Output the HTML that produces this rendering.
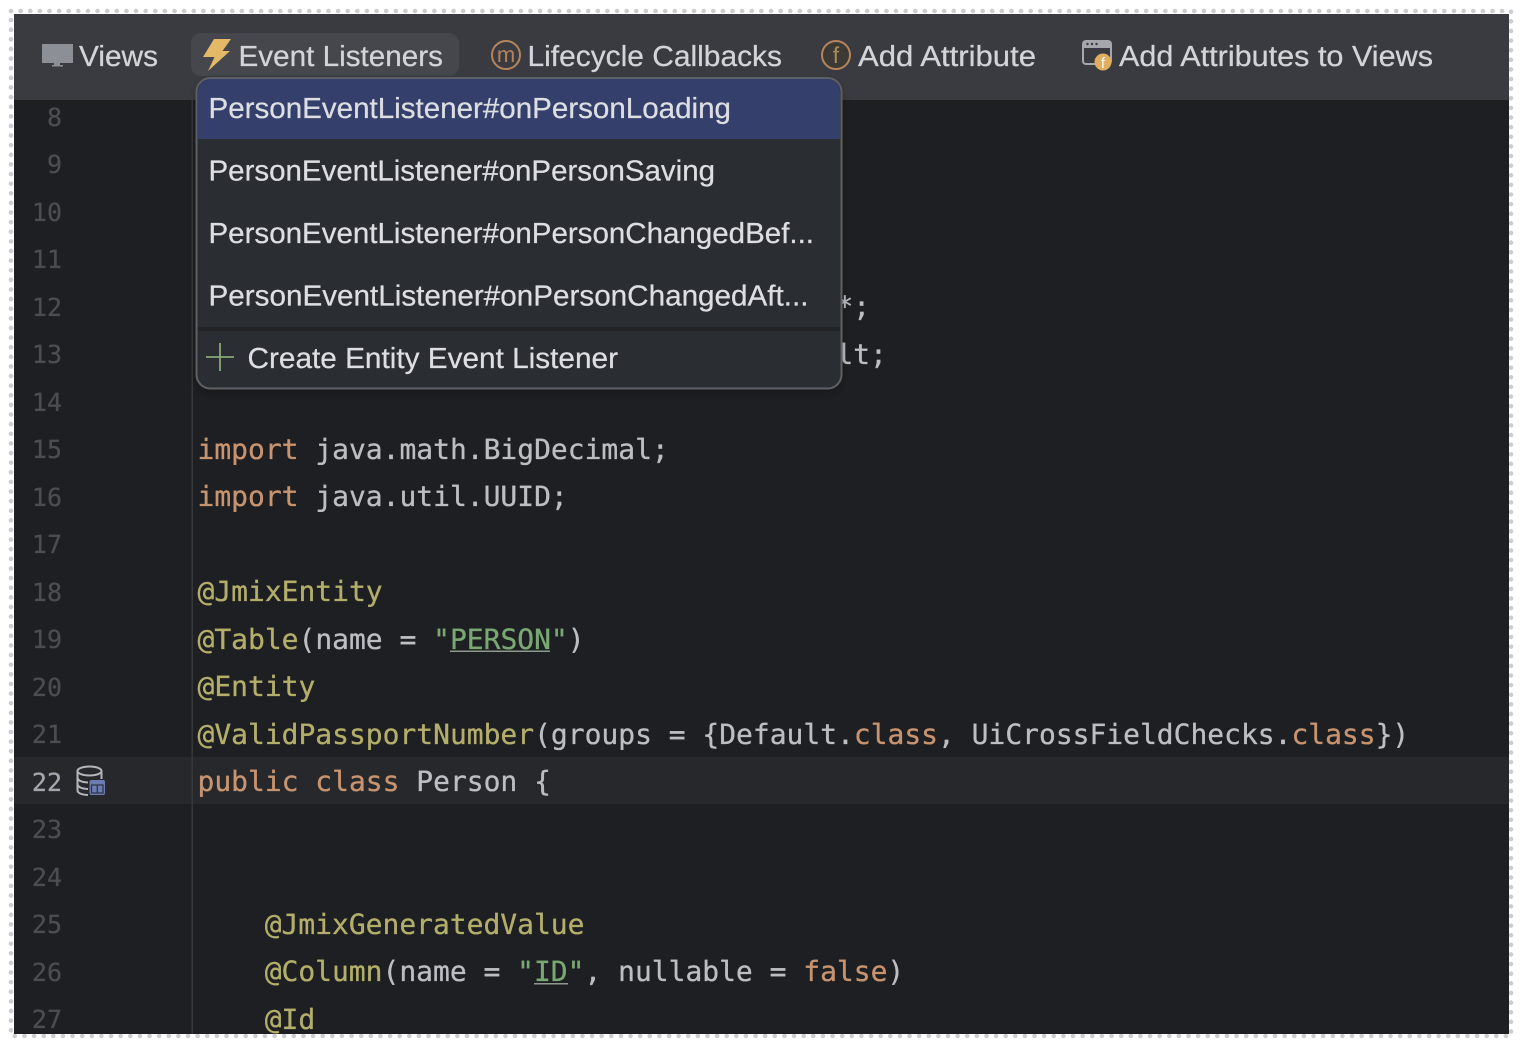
<!DOCTYPE html>
<html><head><meta charset="utf-8">
<style>
html,body{margin:0;padding:0;background:#fff;width:1522px;height:1050px;overflow:hidden}
svg{display:block;filter:blur(.3px)}
text{white-space:pre;text-rendering:geometricPrecision}
.u{font-family:"Liberation Sans",sans-serif;font-size:29px;fill:#d2d4d8;stroke:#d2d4d8;stroke-width:.25px}
.i{font-family:"Liberation Sans",sans-serif;font-size:29px;fill:#dcdee2;stroke:#dcdee2;stroke-width:.25px}
.c{font-family:"DejaVu Sans Mono","Liberation Mono",monospace;font-size:27.96px;fill:#bcbec4;stroke:#bcbec4;stroke-width:.3px}
.n{font-family:"DejaVu Sans Mono","Liberation Mono",monospace;font-size:25px;fill:#4b4d51;stroke:#4b4d51;stroke-width:.25px;text-anchor:end}
.k{fill:#c8946f;stroke:#c8946f}.a{fill:#b3ae6a;stroke:#b3ae6a}.s{fill:#7aa873;stroke:#7aa873}
</style></head><body>
<svg width="1522" height="1050" viewBox="0 0 1522 1050" xmlns="http://www.w3.org/2000/svg">
<defs><filter id="sh" x="-5%" y="-5%" width="110%" height="112%"><feDropShadow dx="0" dy="4" stdDeviation="5" flood-color="#000" flood-opacity=".3"/></filter></defs>
<rect width="1522" height="1050" fill="#fff"/>
<rect x="11" y="11" width="1500" height="1025" fill="none" stroke="#cdcdcf" stroke-width="4.6" stroke-linecap="round" stroke-dasharray="0 9.62"/>
<rect x="14" y="14" width="1495" height="1020" fill="#1e1f22"/>
<rect x="14" y="14" width="1495" height="86" fill="#3a3b40"/>
<rect x="14" y="757" width="1495" height="47" fill="#26282c"/>
<rect x="191.500" y="100" width="1.500" height="934" fill="#36383c"/>

<!-- line numbers -->
<g class="n">
<text class="n" x="62" y="126">8</text>
<text class="n" x="62" y="173">9</text>
<text class="n" x="62" y="221">10</text>
<text class="n" x="62" y="268">11</text>
<text class="n" x="62" y="316">12</text>
<text class="n" x="62" y="363">13</text>
<text class="n" x="62" y="411">14</text>
<text class="n" x="62" y="458">15</text>
<text class="n" x="62" y="506">16</text>
<text class="n" x="62" y="553">17</text>
<text class="n" x="62" y="601">18</text>
<text class="n" x="62" y="648">19</text>
<text class="n" x="62" y="696">20</text>
<text class="n" x="62" y="743">21</text>
<text class="n" x="62" y="791" style="fill:#a4a7ad;stroke:#a4a7ad">22</text>
<text class="n" x="62" y="838">23</text>
<text class="n" x="62" y="886">24</text>
<text class="n" x="62" y="933">25</text>
<text class="n" x="62" y="981">26</text>
<text class="n" x="62" y="1028">27</text>
</g>

<!-- code -->
<text class="c" x="836.400" y="316">*;</text>
<text class="c" x="836.400" y="364">lt;</text>
<text class="c" x="197.500" y="459"><tspan class="k">import</tspan> java.math.BigDecimal;</text>
<text class="c" x="197.500" y="506"><tspan class="k">import</tspan> java.util.UUID;</text>
<text class="c a" x="197.500" y="601">@JmixEntity</text>
<text class="c" x="197.500" y="649"><tspan class="a">@Table</tspan>(name = <tspan class="s">"PERSON"</tspan>)</text>
<rect x="450" y="650.500" width="100" height="1.500" fill="#8c9a8c"/>
<text class="c a" x="197.500" y="696">@Entity</text>
<text class="c" x="197.500" y="744"><tspan class="a">@ValidPassportNumber</tspan>(groups = {Default.<tspan class="k">class</tspan>, UiCrossFieldChecks.<tspan class="k">class</tspan>})</text>
<text class="c" x="197.500" y="791"><tspan class="k">public class</tspan> Person {</text>
<text class="c a" x="264.700" y="934">@JmixGeneratedValue</text>
<text class="c" x="264.700" y="981"><tspan class="a">@Column</tspan>(name = <tspan class="s">"ID"</tspan>, nullable = <tspan class="k">false</tspan>)</text>
<rect x="534" y="983" width="34" height="1.500" fill="#8c9a8c"/>
<text class="c a" x="264.700" y="1029">@Id</text>

<!-- db icon -->
<g fill="none" stroke="#b4b6bb" stroke-width="2">
<ellipse cx="89.500" cy="771" rx="12" ry="4.500"/>
<path d="M77.500 771V790Q77.500 794.500 88 795M77.500 777.500Q78 782 88 782.500M77.500 784Q78 788.500 88 789M101.500 771V779"/>
</g>
<rect x="89.500" y="780" width="15.500" height="15" rx="2" fill="#6b7cb0"/>
<path d="M91.500 785H103V793H91.500ZM97.250 785V793M91.500 785V793" stroke="#2f3648" stroke-width="1.300" fill="none"/>

<!-- toolbar -->
<rect x="191" y="33" width="268" height="43" rx="10" fill="#46474c"/>
<rect x="42" y="44" width="31" height="19" fill="#8d8f96"/>
<rect x="54" y="63" width="6" height="2" fill="#8d8f96"/><rect x="52" y="65" width="11" height="1.500" fill="#8d8f96"/>
<text class="u" x="79" y="66" textLength="79" lengthAdjust="spacingAndGlyphs">Views</text>

<path d="M214 39H231L222.500 51H230L208 71L214.500 57H203Z" fill="#e3b968"/>
<text class="u" x="238.500" y="66" textLength="204.500" lengthAdjust="spacingAndGlyphs">Event Listeners</text>

<circle cx="506" cy="55" r="14" fill="#3a3b40" stroke="#b5845c" stroke-width="2"/>
<text x="506" y="62" text-anchor="middle" font-family="Liberation Sans,sans-serif" font-size="22" fill="#b5845c">m</text>
<text class="u" x="527.500" y="66" textLength="254.500" lengthAdjust="spacingAndGlyphs">Lifecycle Callbacks</text>

<circle cx="836" cy="55" r="14" fill="#3d3a36" stroke="#b5845c" stroke-width="2"/>
<text x="836" y="63" text-anchor="middle" font-family="Liberation Sans,sans-serif" font-size="23" fill="#a88a5c">f</text>
<text class="u" x="858" y="66" textLength="178" lengthAdjust="spacingAndGlyphs">Add Attribute</text>

<rect x="1083" y="41" width="28" height="23" rx="3" fill="none" stroke="#a5a7ac" stroke-width="2"/>
<rect x="1083" y="41" width="28" height="7" fill="#a5a7ac"/>
<circle cx="1087.500" cy="44" r="1.200" fill="#3a3b40"/><circle cx="1092" cy="44" r="1.200" fill="#3a3b40"/><circle cx="1096.500" cy="44" r="1.200" fill="#3a3b40"/>
<circle cx="1103" cy="62" r="8.500" fill="#e0ae5c"/>
<text x="1103" y="68" text-anchor="middle" font-family="Liberation Sans,sans-serif" font-size="15" fill="#fff">f</text>
<text class="u" x="1119" y="66" textLength="314" lengthAdjust="spacingAndGlyphs">Add Attributes to Views</text>

<!-- popup -->
<rect x="196.500" y="78" width="645" height="310.500" rx="14" fill="#2b2d30" filter="url(#sh)"/>
<path d="M198 139V92A13 13 0 0 1 211 79H827A13 13 0 0 1 840 92V139Z" fill="#343f6b"/>
<rect x="198" y="327" width="642" height="4" fill="#232427"/>
<rect x="196.500" y="78" width="645" height="310.500" rx="14" fill="none" stroke="#5d6066" stroke-width="2"/>
<text class="i" x="208.500" y="118" textLength="522.500" lengthAdjust="spacingAndGlyphs">PersonEventListener#onPersonLoading</text>
<text class="i" x="208.500" y="180.500" textLength="506.500" lengthAdjust="spacingAndGlyphs">PersonEventListener#onPersonSaving</text>
<text class="i" x="208.500" y="243" textLength="605.500" lengthAdjust="spacingAndGlyphs">PersonEventListener#onPersonChangedBef...</text>
<text class="i" x="208.500" y="305.500" textLength="600" lengthAdjust="spacingAndGlyphs">PersonEventListener#onPersonChangedAft...</text>
<path d="M206 357H234M220 343V371" stroke="#86a877" stroke-width="1.800" fill="none"/>
<text class="i" x="247.500" y="368" textLength="370.500" lengthAdjust="spacingAndGlyphs">Create Entity Event Listener</text>
</svg>
</body></html>
